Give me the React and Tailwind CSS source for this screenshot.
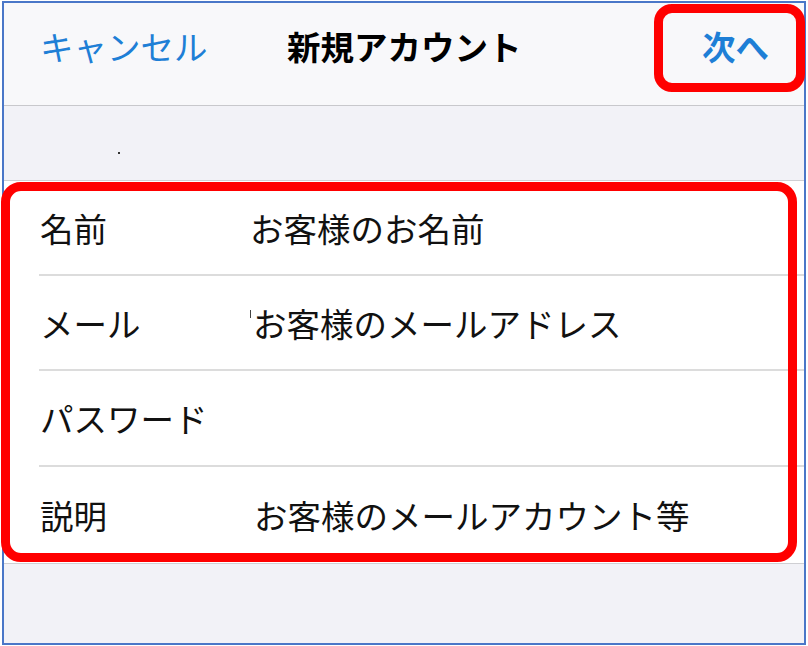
export default function App() {
  const font = { fontFamily: '"Noto Sans CJK JP", "Noto Sans", sans-serif' };
  return (
    <div className="relative w-[808px] h-[646px] bg-white overflow-hidden" style={font}>
      <div className="ml-[2px] mt-[1px] w-[804px] h-[644px] border-2 border-[#4a77c8] flex flex-col">
        {/* nav */}
        <div className="h-[103px] shrink-0 bg-[#f8f8fa] border-b border-[#c8c8cc] flex items-start pt-[26px] text-[33.5px] leading-[34px]">
          <div className="w-[283px] pl-[36px] text-[#1e7fd6]">キャンセル</div>
          <div className="font-bold text-black">新規アカウント</div>
          <div className="ml-auto pr-[35px] font-bold text-[#1e7fd6]">次へ</div>
        </div>
        {/* gray section header */}
        <div className="h-[75px] shrink-0 bg-[#f2f2f7] border-b border-[#cfcfd3] relative">
          <div className="absolute left-[114px] top-[46px] w-[2px] h-[2px] bg-[#333]" />
        </div>
        {/* list */}
        <div className="shrink-0 bg-white text-[33.5px] leading-[34px] text-[#111]">
          <div className="ml-[35px] h-[95px] border-b-2 border-[#dcdcdc] flex items-center">
            <div className="w-[211px] pl-[1px]">名前</div>
            <div>お客様のお名前</div>
          </div>
          <div className="ml-[35px] h-[95px] border-b-2 border-[#dcdcdc] flex items-center">
            <div className="w-[211px] pl-[1px]">メール</div>
            <div className="relative pl-[3px]">
              <span className="absolute left-0 top-[4px] w-[1px] h-[8px] bg-[#444]" />
              お客様のメールアドレス
            </div>
          </div>
          <div className="ml-[35px] h-[96px] border-b-2 border-[#dcdcdc] flex items-center">
            <div className="w-[211px] pl-[1px]">パスワード</div>
          </div>
          <div className="ml-[35px] h-[96px] flex items-center">
            <div className="w-[215px] pl-[1px]">説明</div>
            <div>お客様のメールアカウント等</div>
          </div>
        </div>
        <div className="flex-1 bg-[#f2f2f7] border-t border-[#cfcfd3]" />
      </div>
      {/* annotation boxes */}
      <div className="absolute left-[654px] top-[4px] w-[151px] h-[88px] border-[9px] border-[#ff0000] rounded-[18px]" />
      <div className="absolute left-[1px] top-[182px] w-[796px] h-[380px] border-[9px] border-[#ff0000] rounded-[20px]" />
    </div>
  );
}
